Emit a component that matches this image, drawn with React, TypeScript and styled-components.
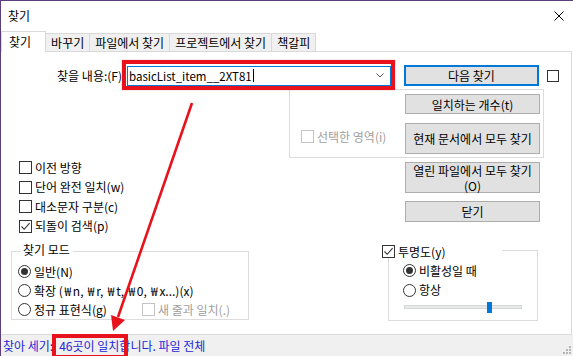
import React from "react";
import styled, { createGlobalStyle } from "styled-components";

const GlobalStyle = createGlobalStyle`
  html, body { margin: 0; padding: 0; background: #fff; }
  body {
    font-family: "Noto Sans CJK KR", "Noto Sans", sans-serif;
    font-size: 12px;
    line-height: 14px;
    color: #000;
  }
  * { box-sizing: border-box; }
`;

const RED = "#e8121c";

const Window = styled.div`
  position: relative;
  width: 573px;
  height: 356px;
  display: flex;
  flex-direction: column;
  background: #fff;
  border-top: 1px solid #5b3f7d;
  border-left: 1px solid #5b3f7d;
  overflow: hidden;
`;

const TitleBar = styled.div`
  height: 30px;
  display: flex;
  align-items: center;
  justify-content: space-between;
  padding: 0 9px 0 7px;
`;

const TabStrip = styled.div`
  height: 20px;
  display: flex;
  align-items: flex-end;
  position: relative;
  z-index: 1;
`;

const Tab = styled.div<{ $active?: boolean }>`
  height: ${(p) => (p.$active ? 21 : 18)}px;
  margin-bottom: ${(p) => (p.$active ? -1 : 0)}px;
  margin-left: ${(p) => (p.$active ? 0 : -1)}px;
  padding: ${(p) => (p.$active ? "0 14px 0 7px" : "0 5px")};
  display: flex;
  align-items: center;
  border: 1px solid #d9d9d9;
  border-bottom: none;
  background: ${(p) => (p.$active ? "#fff" : "#f0f0f0")};
  white-space: nowrap;
  position: relative;
  z-index: ${(p) => (p.$active ? 2 : 1)};
`;

const Panel = styled.div`
  flex: 1;
  margin-right: 1px;
  border: 1px solid #d9d9d9;
  border-left: none;
  display: flex;
  flex-direction: column;
`;

const FindRow = styled.div`
  display: flex;
  align-items: center;
  height: 21px;
  margin-top: 13px;
`;

const FindLabel = styled.div`
  width: 121px;
  text-align: right;
  margin-right: 5px;
  white-space: nowrap;
`;

const ComboWrap = styled.div`
  position: relative;
  width: 264px;
  height: 20px;
`;

const Combo = styled.div`
  height: 100%;
  border: 1px solid #0078d7;
  background: #fff;
  display: flex;
  align-items: center;
  padding: 0 6px 0 1px;
  font-size: 11.5px;
`;

const Caret = styled.span`
  display: inline-block;
  width: 1px;
  height: 13px;
  background: #000;
  margin-left: 1px;
`;

const Chevron = styled.svg`
  margin-left: auto;
`;

const Highlight = styled.div`
  position: absolute;
  top: -6px;
  left: -5px;
  right: -4px;
  bottom: -4px;
  border: 4px solid ${RED};
  box-shadow: 0 0 1px rgba(232, 18, 28, 0.5);
  pointer-events: none;
`;

const Button = styled.div<{ $h?: number; $default?: boolean }>`
  width: 135px;
  height: ${(p) => p.$h ?? 21}px;
  background: #e1e1e1;
  border: ${(p) => (p.$default ? "2px solid #0078d7" : "1px solid #adadad")};
  display: flex;
  align-items: center;
  justify-content: center;
  text-align: center;
  line-height: 15px;
  white-space: nowrap;
`;

const NextButton = styled(Button)`
  margin-left: 13px;
`;

const TwoLine = styled.span`
  display: block;
  line-height: 15px;
`;

const SideBox = styled.span`
  margin-left: 8px;
  width: 12px;
  height: 12px;
  border: 1px solid #333;
`;

const Middle = styled.div`
  display: flex;
  margin-top: 3px;
`;

const LeftCol = styled.div`
  width: 288px;
  padding: 69px 0 0 18px;
`;

const RightCol = styled.div`
  width: 255px;
  display: flex;
  flex-direction: column;
  align-items: flex-end;
`;

const ScopeGroup = styled.div`
  align-self: stretch;
  height: 69px;
  border: 1px solid #dcdcdc;
  display: flex;
  align-items: flex-start;
  padding: 4px 3px 0 11px;
`;

const ScopeCheck = styled.div`
  margin-top: 33px;
`;

const ButtonStack = styled.div`
  margin-left: auto;
  display: flex;
  flex-direction: column;
  gap: 9px;
`;

const SideButton = styled(Button)<{ $gap: number }>`
  margin-top: ${(p) => p.$gap}px;
  margin-right: 4px;
`;

const Row = styled.label<{ $h?: number; $w?: number; $disabled?: boolean }>`
  display: flex;
  align-items: center;
  height: ${(p) => p.$h ?? 19.5}px;
  ${(p) => (p.$w ? `width: ${p.$w}px;` : "")}
  color: ${(p) => (p.$disabled ? "#a0a0a0" : "#000")};
  white-space: nowrap;
`;

const Box = styled.span<{ $disabled?: boolean }>`
  width: 13px;
  height: 13px;
  flex: none;
  border: 1px solid ${(p) => (p.$disabled ? "#c4c4c4" : "#333")};
  background: #fff;
  margin-right: 3px;
  display: flex;
  align-items: center;
  justify-content: center;
`;

const Circle = styled.span`
  width: 13px;
  height: 13px;
  flex: none;
  border: 1px solid #333;
  border-radius: 50%;
  background: #fff;
  margin-right: 3px;
  display: flex;
  align-items: center;
  justify-content: center;
`;

const Dot = styled.span`
  width: 7px;
  height: 7px;
  border-radius: 50%;
  background: #333;
`;

const Won = styled.span`
  display: inline-block;
  width: 10px;
  text-align: center;
`;

const Bottom = styled.div`
  display: flex;
  align-items: flex-start;
  margin-top: 6px;
  padding-left: 10px;
`;

const ModeGroup = styled.fieldset`
  width: 238px;
  margin: 0;
  padding: 1px 0 0 6px;
  border: 1px solid #dcdcdc;
`;

const Legend = styled.legend`
  padding: 0 3px 3px 2px;
  margin-left: 3px;
  line-height: 16px;
`;

const InlineRow = styled.div`
  display: flex;
  align-items: center;
`;

const TransWrap = styled.div`
  position: relative;
  margin-left: 139px;
  margin-top: 8px;
  width: 150px;
  height: 71px;
  border: 1px solid #dcdcdc;
  padding: 10px 0 0 14px;
`;

const TransToggle = styled.div`
  position: absolute;
  top: -6px;
  left: -7px;
  width: 120px;
  background: #fff;
`;

const Slider = styled.div`
  position: relative;
  margin: 2px 0 0 1px;
  width: 118px;
  height: 10px;
  display: flex;
  align-items: center;
`;

const Track = styled.div`
  width: 100%;
  height: 4px;
  background: #e7eaea;
  border: 1px solid #d6d6d6;
`;

const Thumb = styled.div`
  position: absolute;
  top: 0;
  width: 5px;
  height: 11px;
  background: #0078d7;
`;

const StatusBar = styled.div`
  height: 21px;
  background: #f0f0f0;
  display: flex;
  align-items: center;
  padding-left: 2px;
  color: #2424d8;
  white-space: nowrap;
`;

const Marked = styled.span`
  position: relative;
  margin-left: 6px;
  &::after {
    content: "";
    position: absolute;
    left: -7px;
    right: -9px;
    top: -5px;
    bottom: -6px;
    border: 4px solid ${RED};
  }
`;

const Grip = styled.svg`
  align-self: flex-end;
  margin: 0 2px 2px auto;
`;

const Annotation = styled.svg`
  position: absolute;
  top: -1px;
  left: -1px;
  pointer-events: none;
`;

const Check = ({ checked, disabled }: { checked?: boolean; disabled?: boolean }) => (
  <Box $disabled={disabled}>
    {checked && (
      <svg width="11" height="11" viewBox="0 0 11 11">
        <path d="M1.5 5.5 L4.2 8.3 L9.6 2.2" fill="none" stroke="#333" strokeWidth="1.1" />
      </svg>
    )}
  </Box>
);

const Radio = ({ checked }: { checked?: boolean }) => <Circle>{checked && <Dot />}</Circle>;

const tabs = ["찾기", "바꾸기", "파일에서 찾기", "프로젝트에서 찾기", "책갈피"];
const options = [
  { text: "이전 방향", checked: false },
  { text: "단어 완전 일치(w)", checked: false },
  { text: "대소문자 구분(c)", checked: false },
  { text: "되돌이 검색(p)", checked: true },
];

export default function App() {
  return (
    <>
      <GlobalStyle />
      <Window>
        <TitleBar>
          <span>찾기</span>
          <svg width="10" height="10" viewBox="0 0 10 10">
            <path d="M0.5 0.5 L9.5 9.5 M9.5 0.5 L0.5 9.5" stroke="#000" strokeWidth="1" />
          </svg>
        </TitleBar>

        <TabStrip>
          {tabs.map((t, i) => (
            <Tab key={t} $active={i === 0}>
              {t}
            </Tab>
          ))}
        </TabStrip>

        <Panel>
          <FindRow>
            <FindLabel>찾을 내용:(F)</FindLabel>
            <ComboWrap>
              <Combo>
                basicList_item__2XT81
                <Caret />
                <Chevron width="8" height="5" viewBox="0 0 8 5">
                  <path d="M0.5 0.5 L4 4 L7.5 0.5" fill="none" stroke="#555" strokeWidth="1" />
                </Chevron>
              </Combo>
              <Highlight />
            </ComboWrap>
            <NextButton $default>다음 찾기</NextButton>
            <SideBox />
          </FindRow>

          <Middle>
            <LeftCol>
              {options.map((o) => (
                <Row key={o.text}>
                  <Check checked={o.checked} />
                  {o.text}
                </Row>
              ))}
            </LeftCol>
            <RightCol>
              <ScopeGroup>
                <ScopeCheck>
                  <Row $disabled>
                    <Check disabled />
                    선택한 영역(i)
                  </Row>
                </ScopeCheck>
                <ButtonStack>
                  <Button $h={20}>일치하는 개수(t)</Button>
                  <Button $h={31}>현재 문서에서 모두 찾기</Button>
                </ButtonStack>
              </ScopeGroup>
              <SideButton $gap={4} $h={31}>
                <TwoLine>
                  열린 파일에서 모두 찾기
                  <br />
                  (O)
                </TwoLine>
              </SideButton>
              <SideButton $gap={8} $h={21}>
                닫기
              </SideButton>
            </RightCol>
          </Middle>

          <Bottom>
            <ModeGroup>
              <Legend>찾기 모드</Legend>
              <Row $h={19}>
                <Radio checked />
                일반(N)
              </Row>
              <Row $h={19}>
                <Radio />
                <span>
                  확장 (<Won>₩</Won>n, <Won>₩</Won>r, <Won>₩</Won>t, <Won>₩</Won>0, <Won>₩</Won>x...)(x)
                </span>
              </Row>
              <InlineRow>
                <Row $h={19} $w={124}>
                  <Radio />
                  정규 표현식(g)
                </Row>
                <Row $h={19} $disabled>
                  <Check disabled />
                  새 줄과 일치(.)
                </Row>
              </InlineRow>
            </ModeGroup>

            <TransWrap>
              <TransToggle>
                <Row $h={13}>
                  <Check checked />
                  투명도(y)
                </Row>
              </TransToggle>
              <Row>
                <Radio checked />
                비활성일 때
              </Row>
              <Row>
                <Radio />
                항상
              </Row>
              <Slider>
                <Track />
                <Thumb style={{ left: "70%" }} />
              </Slider>
            </TransWrap>
          </Bottom>
        </Panel>

        <StatusBar>
          찾아 세기:
          <Marked>46곳이 일치</Marked>
          합니다. 파일 전체
          <Grip width="8" height="8" viewBox="0 0 8 8">
            <g fill="#b5b5b5">
              <rect x="6" y="0" width="2" height="2" />
              <rect x="3" y="3" width="2" height="2" />
              <rect x="6" y="3" width="2" height="2" />
              <rect x="0" y="6" width="2" height="2" />
              <rect x="3" y="6" width="2" height="2" />
              <rect x="6" y="6" width="2" height="2" />
            </g>
          </Grip>
        </StatusBar>

        <Annotation width="573" height="356" viewBox="0 0 573 356">
          <line x1="192" y1="103" x2="118" y2="317" stroke={RED} strokeWidth="2.6" />
          <polygon points="113,331 111,315 125,320" fill={RED} />
        </Annotation>
      </Window>
    </>
  );
}
